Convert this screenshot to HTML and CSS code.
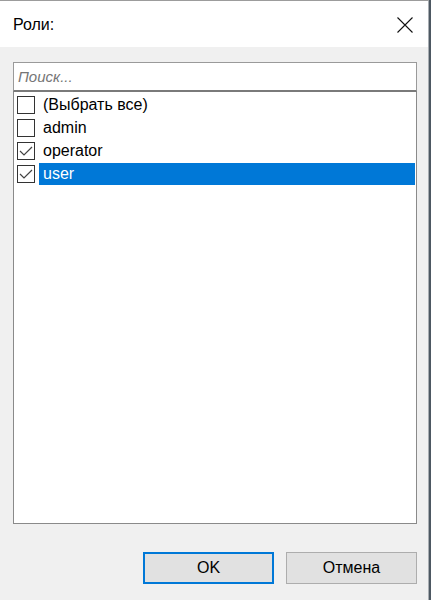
FILE: index.html
```html
<!DOCTYPE html>
<html lang="ru">
<head>
<meta charset="utf-8">
<title>Роли</title>
<link rel="stylesheet" href="styles.css">
</head>
<body>
<div class="dialog">
  <div class="titlebar">
    <span class="title">Роли:</span>
    <svg class="close" width="16" height="16" viewBox="0 0 16 16"><path d="M0.5 0.5 L15.5 15.5 M15.5 0.5 L0.5 15.5" stroke="#111" stroke-width="1.1" fill="none"/></svg>
  </div>
  <div class="content">
    <div class="search">Поиск...</div>
    <div class="list">
      <div class="row"><span class="box"></span><span class="label">(Выбрать все)</span></div>
      <div class="row"><span class="box"></span><span class="label">admin</span></div>
      <div class="row"><span class="box"><svg width="18" height="18" viewBox="0 0 18 18"><path d="M3 9 L7 13 L15 5" stroke="#444" stroke-width="1.2" fill="none"/></svg></span><span class="label">operator</span></div>
      <div class="row"><span class="box"><svg width="18" height="18" viewBox="0 0 18 18"><path d="M3 9 L7 13 L15 5" stroke="#444" stroke-width="1.2" fill="none"/></svg></span><span class="label selected">user</span></div>
    </div>
    <div class="buttons">
      <div class="btn default">OK</div>
      <div class="btn">Отмена</div>
    </div>
  </div>
</div>
</body>
</html>
```
FILE: styles.css
```css
html, body {
  margin: 0;
  padding: 0;
  background: #4d5862;
  height: 600px;
  overflow: hidden;
}
body {
  font-family: "Liberation Sans", Arial, sans-serif;
  font-size: 16px;
  color: #000;
}
.dialog {
  width: 429px;
  height: 600px;
  display: flex;
  flex-direction: column;
  border-top: 1px solid #9c9c9c;
  border-right: 1px solid #a8adb2;
  box-sizing: border-box;
  background: #f0f0f0;
}
.titlebar {
  height: 46px;
  background: #fff;
  display: flex;
  align-items: center;
  justify-content: space-between;
  padding: 2px 15px 0 13px;
  box-sizing: border-box;
}
.title {
  font-size: 16px;
}
.close {
  display: block;
  margin-top: -1px;
}
.content {
  flex: 1;
  display: flex;
  flex-direction: column;
  padding: 15px 11px 16px 13px;
}
.search {
  height: 30px;
  border: 1px solid #9a9a9a;
  border-bottom: 2px solid #7a7a7a;
  box-sizing: border-box;
  background: #fff;
  font-style: italic;
  color: #767676;
  font-size: 15px;
  padding-left: 4px;
  line-height: 27px;
}
.list {
  height: 432px;
  border: 1px solid #8a8a8a;
  border-top: none;
  background: #fff;
  box-sizing: border-box;
  padding-top: 1px;
}
.row {
  height: 23px;
  display: flex;
  align-items: center;
  padding-left: 3px;
}
.box {
  width: 18px;
  height: 18px;
  border: 1px solid #333;
  box-sizing: border-box;
  background: #fff;
  flex: none;
}
.box svg {
  display: block;
  margin: -1px 0 0 -1px;
}
.label {
  margin-left: 4px;
  padding-left: 4px;
  height: 22px;
  line-height: 22px;
  flex: 1;
  margin-right: 1px;
}
.label.selected {
  background: #0078d7;
  color: #fff;
}
.buttons {
  display: flex;
  justify-content: flex-end;
  gap: 12px;
  margin-top: 28px;
}
.btn {
  width: 131px;
  height: 32px;
  box-sizing: border-box;
  border: 1px solid #adadad;
  background: #e1e1e1;
  display: flex;
  align-items: center;
  justify-content: center;
  font-size: 16px;
}
.btn.default {
  border: 2px solid #0078d7;
}
```
